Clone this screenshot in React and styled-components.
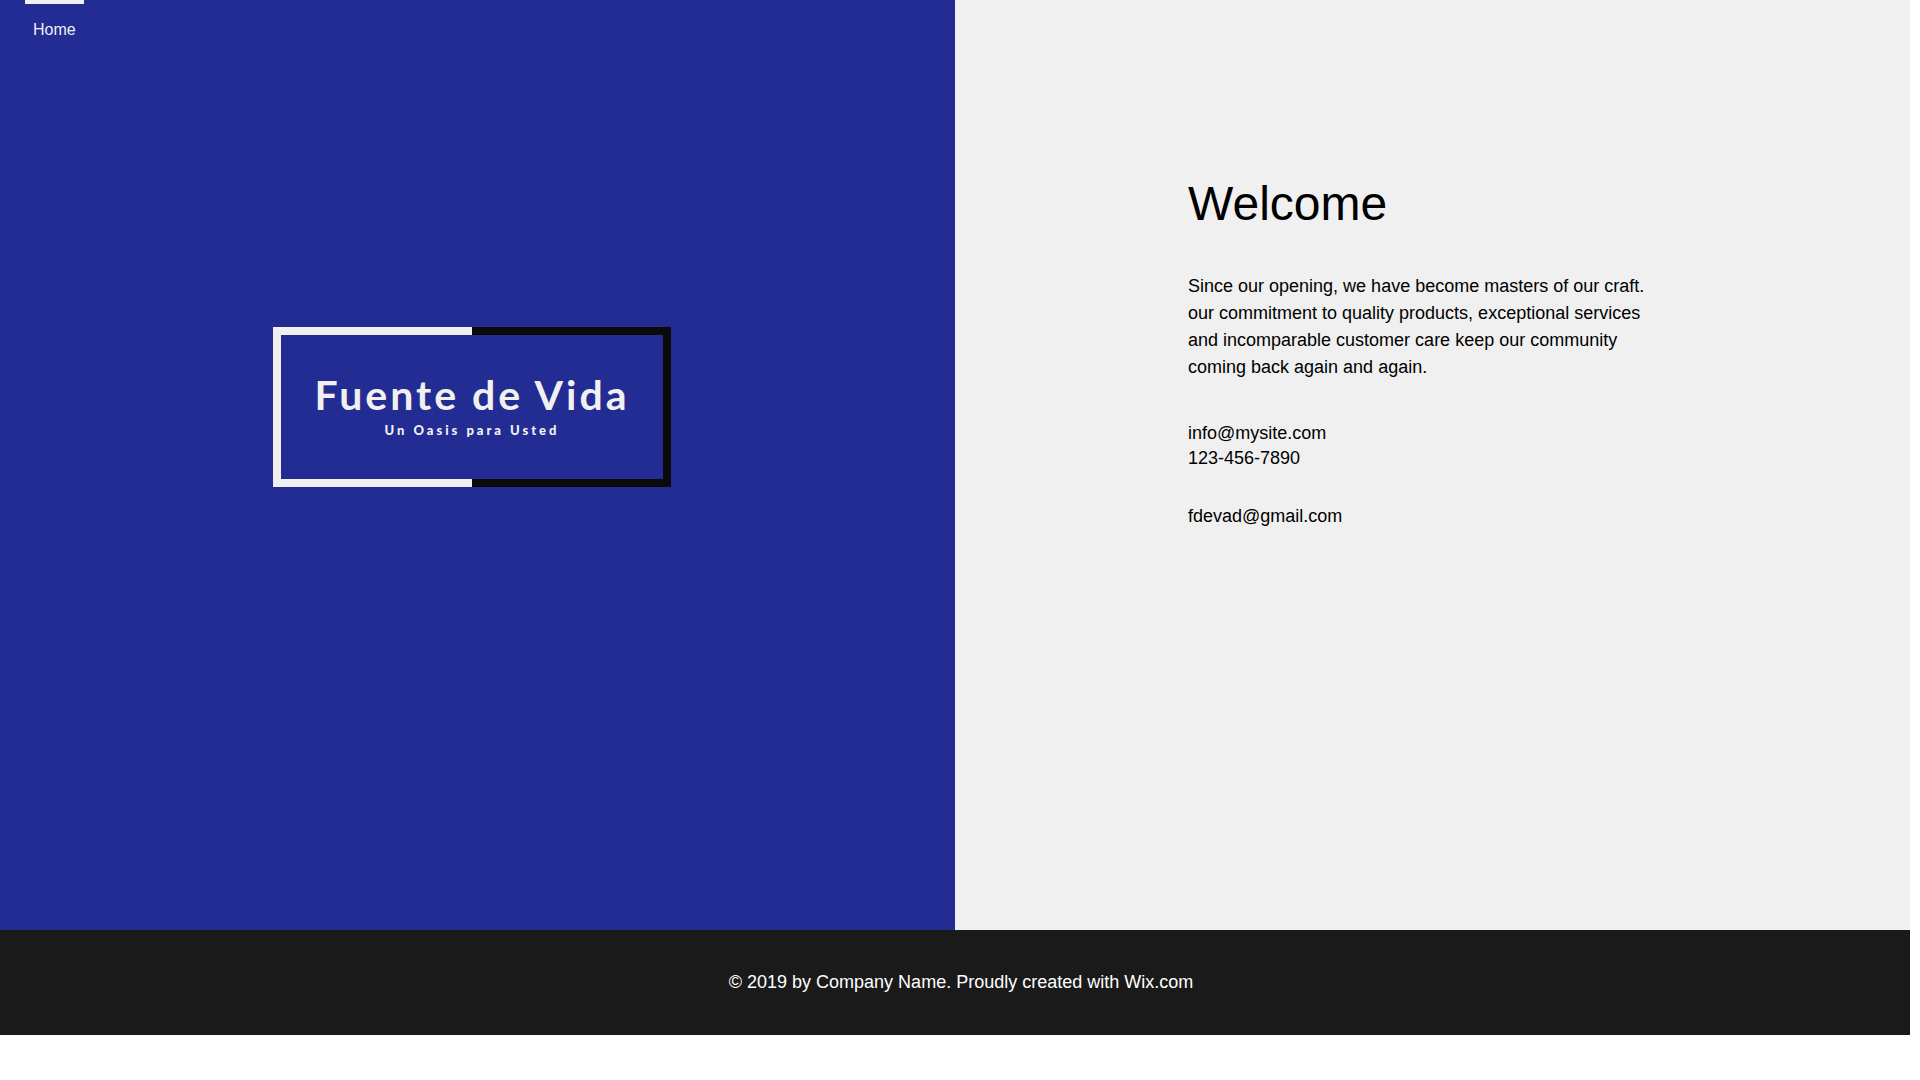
import React from 'react';
import styled, { createGlobalStyle } from 'styled-components';

const contacts = [
    { label: 'info@mysite.com', href: 'mailto:info@mysite.com' },
    { label: '123-456-7890', href: 'tel:123-456-7890' },
];

// split frame with the church name inside
const Logo = () => (
    <LogoFrame>
        <LogoTitle>Fuente de Vida</LogoTitle>
        <LogoTagline>Un Oasis para Usted</LogoTagline>
    </LogoFrame>
)

const App = () => {
    return (
        <Page>
            <GlobalStyle />
            <Main>
                <BrandPanel>
                    <Nav>
                        <NavLink href='#home'>Home</NavLink>
                    </Nav>
                    <Logo />
                </BrandPanel>
                <InfoPanel>
                    <InfoContent>
                        <Title>Welcome</Title>
                        <Intro>
                            Since our opening, we have become masters of our craft. our commitment
                            to quality products, exceptional services and incomparable customer care
                            keep our community coming back again and again.
                        </Intro>
                        <ContactList>
                            {contacts.map(c => (
                                <ContactLink key={c.label} href={c.href}>{c.label}</ContactLink>
                            ))}
                        </ContactList>
                        <ContactLink href='mailto:fdevad@gmail.com'>fdevad@gmail.com</ContactLink>
                    </InfoContent>
                </InfoPanel>
            </Main>
            <Footer>© 2019 by Company Name. Proudly created with Wix.com</Footer>
        </Page>
    )
}
export default App;

// Styling
const GlobalStyle = createGlobalStyle`
    * {
        box-sizing: border-box;
    }
    body {
        margin: 0;
        background: #FFFFFF;
        font-family: 'Liberation Sans', Arial, sans-serif;
        font-size: 18px;
        color: #000000;
    }
`

const Page = styled.div`
    padding-right: 10px;
`

const Main = styled.main`
    display: grid;
    grid-template-columns: 1fr 1fr;
    min-height: 930px;
`

const BrandPanel = styled.section`
    display: flex;
    flex-direction: column;
    align-items: center;
    gap: 287px;
    padding-right: 11px;
    background: #222C93;
`

const Nav = styled.nav`
    display: flex;
    align-self: flex-start;
    padding-left: 25px;
`

const NavLink = styled.a`
    border-top: 4px solid #F0F0F0;
    padding: 16px 8px 0;
    font-size: 16px;
    line-height: 20px;
    color: #F0F0F0;
    text-decoration: none;
`

const LogoFrame = styled.div`
    display: flex;
    flex-direction: column;
    align-items: center;
    width: 398px;
    height: 160px;
    padding-top: 37px;
    border: 8px solid;
    border-image: linear-gradient(to right, #F0F0F0 50%, #0A0A0A 50%) 8;
    font-family: Lato, sans-serif;
    color: #F0F0F0;
`

const LogoTitle = styled.div`
    font-size: 41px;
    font-weight: bold;
    line-height: 46px;
    letter-spacing: 3px;
    white-space: nowrap;
`

const LogoTagline = styled.div`
    font-size: 13px;
    font-weight: 900;
    line-height: 24px;
    letter-spacing: 3px;
`

const InfoPanel = styled.section`
    display: flex;
    justify-content: center;
    background: #F0F0F0;
`

const InfoContent = styled.div`
    width: 489px;
    padding-top: 175px;
`

const Title = styled.h1`
    margin: 0 0 40px;
    font-size: 48px;
    font-weight: normal;
    line-height: 58px;
`

const Intro = styled.p`
    max-width: 470px;
    margin: 0;
    line-height: 27px;
`

const ContactList = styled.address`
    display: flex;
    flex-direction: column;
    align-items: flex-start;
    margin: 40px 0 33px;
    font-style: normal;
`

const ContactLink = styled.a`
    line-height: 25px;
    color: inherit;
    text-decoration: none;
`

const Footer = styled.footer`
    min-height: 105px;
    padding: 40px 0 40px 12px;
    background: #1A1A1A;
    line-height: 25px;
    color: #FFFFFF;
    text-align: center;
`
